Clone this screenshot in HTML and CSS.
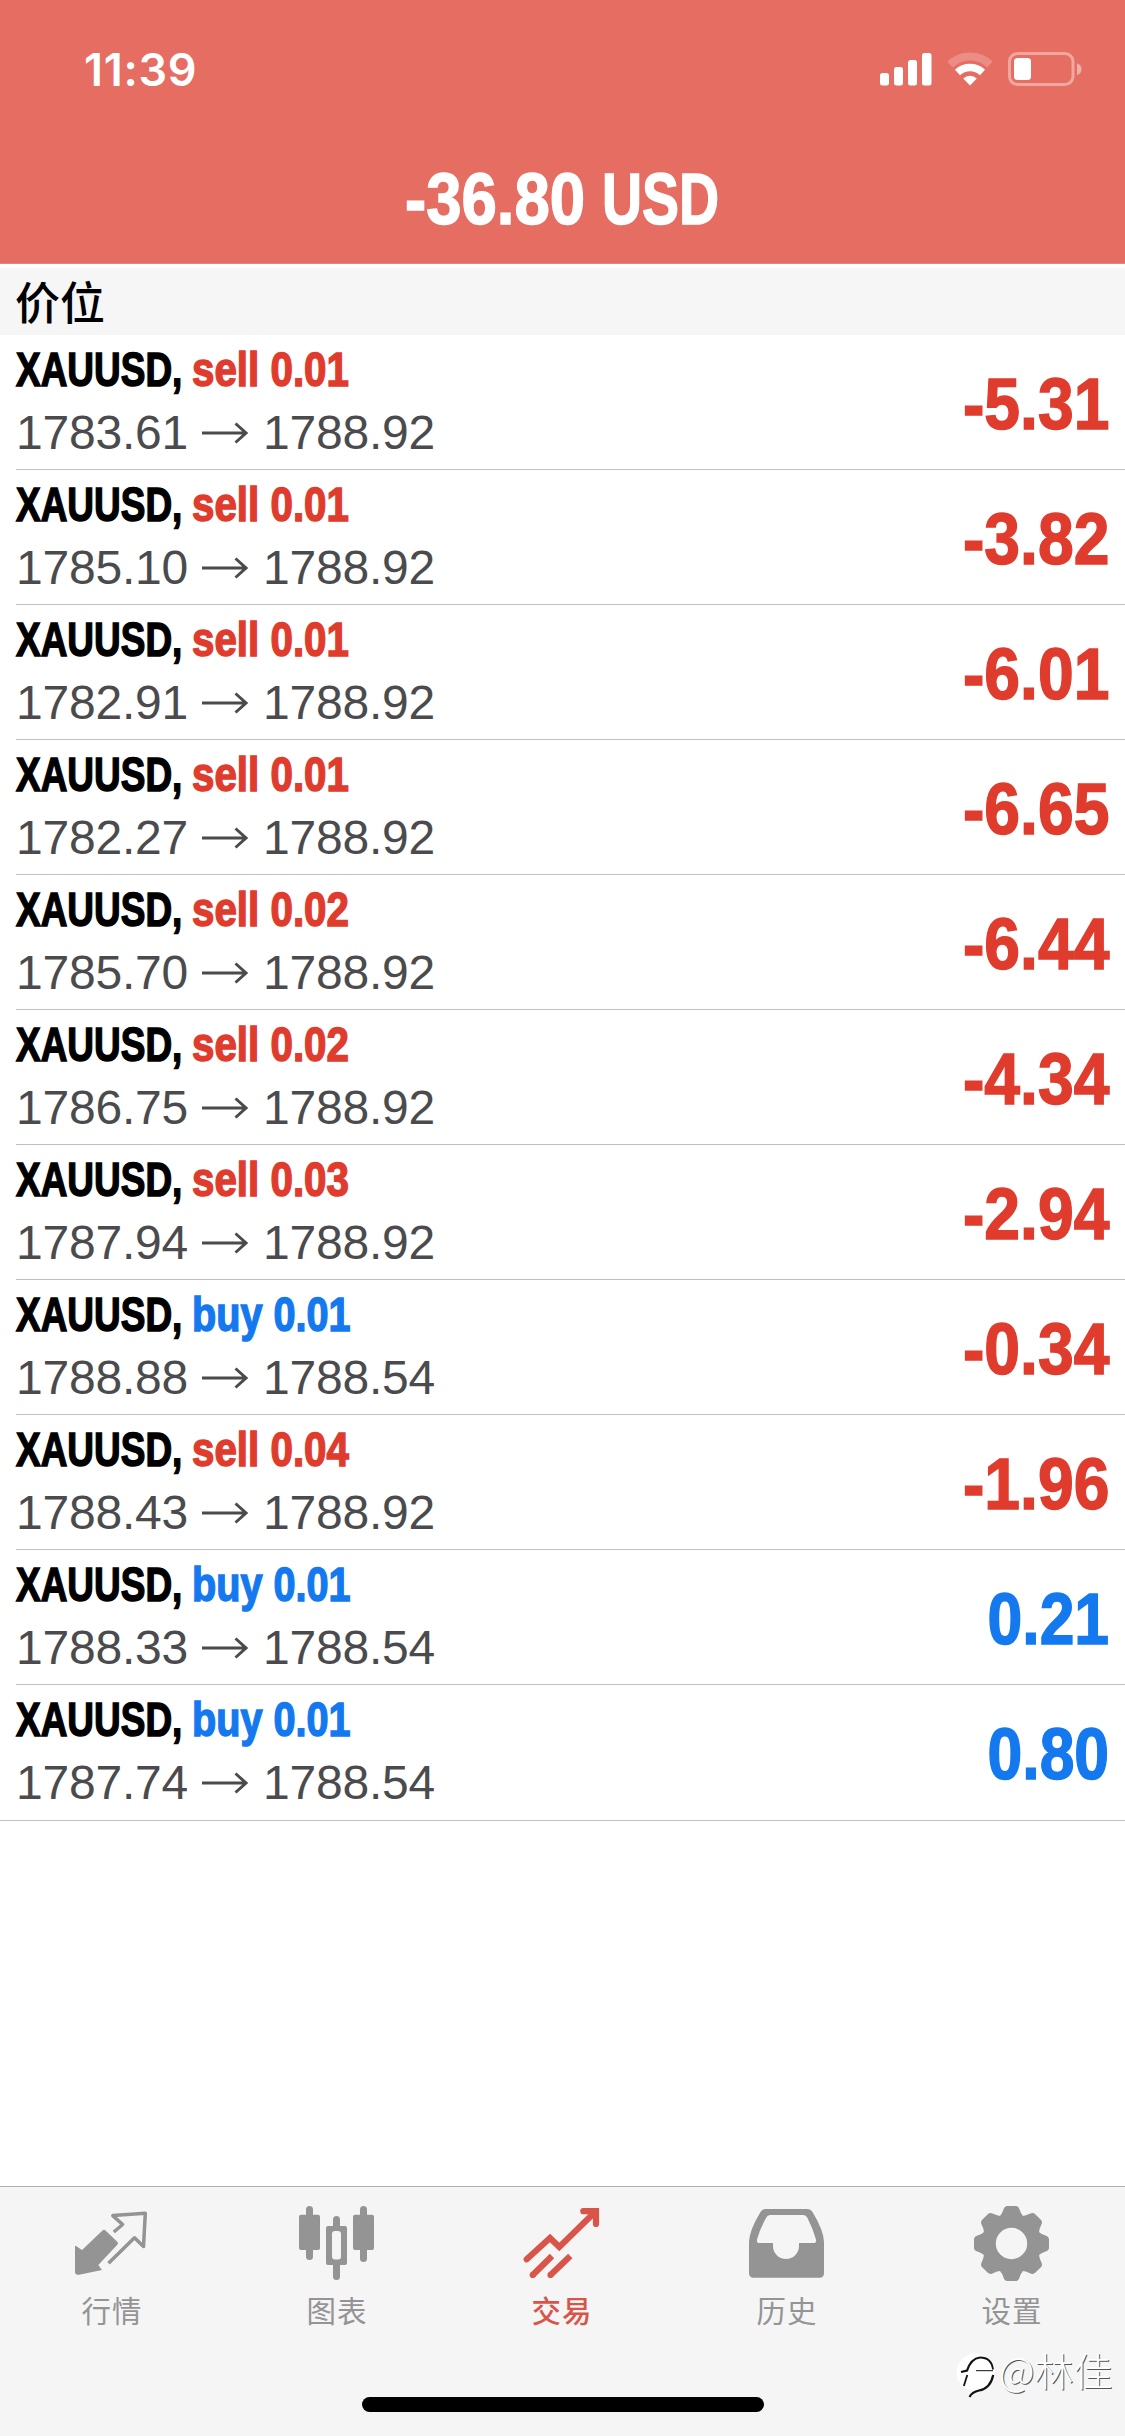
FILE: index.html
```html
<!DOCTYPE html>
<html lang="zh-CN">
<head>
<meta charset="utf-8">
<title>交易</title>
<link rel="stylesheet" href="styles.css">
</head>
<body>
<div class="app">
  <header class="header">
    <div class="status">
      <span class="time">11:39</span>
      <div class="indicators">
        <svg class="signal" width="52" height="34" viewBox="0 0 52 34" fill="#fff"><rect x="0" y="21" width="9" height="12.5" rx="2.5"/><rect x="14" y="15" width="9" height="18.5" rx="2.5"/><rect x="28" y="8" width="9" height="25.5" rx="2.5"/><rect x="42" y="1" width="9.500" height="32.500" rx="2.500"/></svg>
        <svg class="wifi" width="46" height="34" viewBox="0 0 46 34" fill="none" stroke="#fff"><path d="M3 12.500A29 29 0 0 1 43 12.500" stroke-width="8" opacity=".22"/><path d="M10.500 20.500A18.300 18.300 0 0 1 35.500 20.500" stroke-width="7.500"/><path d="M23 33.500L16.200 26.600A9.800 9.800 0 0 1 29.800 26.600Z" fill="#fff" stroke="none"/></svg>
        <svg class="battery" width="75" height="34" viewBox="0 0 75 34"><rect x="1.500" y="1.500" width="63.500" height="31" rx="8" fill="none" stroke="#fff" stroke-opacity=".4" stroke-width="3"/><path d="M69 11.500Q73.500 12.500 73.500 17.300T69 23Z" fill="#fff" fill-opacity=".45"/><rect x="6" y="6" width="17" height="22" rx="3.500" fill="#fff"/></svg>
      </div>
    </div>
    <h1 class="balance"><span class="amount">-36.80</span> <span class="currency">USD</span></h1>
  </header>
  <h2 class="section">价位</h2>
  <main class="positions" id="positions"></main>
  <nav class="tabs">
    <a class="tab">
      <svg width="75" height="75" viewBox="0 0 75 75"><path d="M1 40L7 44L27.500 24.500Q29 23 30.500 24.500L42.500 36Q43.500 37.300 42.500 38.500L23.300 59L27 64L4 68.800Q0 69 0 66V40Z" fill="currentColor"/><path d="M38.800 26L47.600 18.500L37.800 9.600L70.300 7.300L68.500 40.600L59.500 31.800L33.500 57.300" fill="none" stroke="currentColor" stroke-width="3.500" stroke-linejoin="round"/></svg>
      <span>行情</span>
    </a>
    <a class="tab">
      <svg width="75" height="75" viewBox="0 0 75 75" fill="currentColor"><rect x="-1" y="8.700" width="21" height="35.300" rx="2"/><rect x="6" y="0" width="7" height="54" rx="3.500"/><path fill-rule="evenodd" d="M28 20H45Q47 20 47 22V57Q47 59 45 59H28Q26 59 26 57V22Q26 20 28 20ZM35 25Q32 25 32 28V50.500Q32 53.500 35 53.500H38Q41 53.500 41 50.500V28Q41 25 38 25Z"/><path d="M33 21V13.500A3.500 3.500 0 0 1 40 13.500V21ZM33 58V70.500A3.500 3.500 0 0 0 40 70.500V58Z"/><rect x="53" y="8.700" width="21" height="35.300" rx="2"/><rect x="60" y="0" width="7" height="56" rx="3.500"/></svg>
      <span>图表</span>
    </a>
    <a class="tab active">
      <svg width="75" height="75" viewBox="0 0 75 75" fill="none" stroke="currentColor" stroke-width="6.200"><path d="M1.700 53.300L25 32L34.300 41L70 6M58.300 5.200H71V18" stroke-linecap="round" stroke-linejoin="miter"/><path d="M7.700 69L27 50M25.500 69L45.300 50"/><g fill="currentColor" stroke="none"><circle cx="7.700" cy="69" r="3.100"/><circle cx="25.500" cy="69" r="3.100"/></g></svg>
      <span>交易</span>
    </a>
    <a class="tab">
      <svg width="75" height="75" viewBox="0 0 75 75"><path fill="currentColor" fill-rule="evenodd" d="M16 3H57Q60.500 3 62.500 6Q73.500 24 74 36V67Q74 71.700 69.500 71.700H3.500Q-1 71.700 -1 67V36Q-.5 24 10.500 6Q12.500 3 16 3ZM20 9Q17.500 9 16 12Q10 23 7 33.500Q6.500 37 9.500 37H23V40A13 13 0 0 0 49 40V37H63.500Q66.500 37 66 33.500Q63 23 57.500 12Q56 9 53.500 9Z"/></svg>
      <span>历史</span>
    </a>
    <a class="tab">
      <svg width="75" height="75" viewBox="-37.500 -37.500 75 75" fill="currentColor"><defs><path id="tooth" d="M-14 -22L-11.500 -27.500Q-9.500 -29.500 -8 -34Q-7 -37.500 -4 -37.500H4Q7 -37.500 8 -34Q9.500 -29.500 11.500 -27.500L14 -22Z"/></defs><g transform="translate(-1 0)"><circle r="22.500" fill="none" stroke="currentColor" stroke-width="13.600"/><use href="#tooth"/><use href="#tooth" transform="rotate(45)"/><use href="#tooth" transform="rotate(90)"/><use href="#tooth" transform="rotate(135)"/><use href="#tooth" transform="rotate(180)"/><use href="#tooth" transform="rotate(225)"/><use href="#tooth" transform="rotate(270)"/><use href="#tooth" transform="rotate(315)"/></g></svg>
      <span>设置</span>
    </a>
  </nav>
  <div class="home"></div>
  <div class="mark">
    <svg width="44" height="52" viewBox="0 0 44 52" fill="none" stroke="#111"><circle cx="20.500" cy="24.500" r="19" fill="#fff" stroke="none"/><path d="M6 24L12 22.600Q16 10.500 25 9.500" stroke-width="2.200"/><path d="M25 9.500Q36.500 9.500 38 21.500M12.300 27L8.800 38" stroke-width="1.800"/><path d="M21 22.700H38" stroke-width="1"/><path d="M38.200 27Q35.500 40.500 24 42.500Q17 44 14.500 49" stroke-width="2.200"/></svg>
    <span>@林佳</span>
  </div>
</div>
<script src="app.js"></script>
</body>
</html>
```
FILE: app.js
```js
const positions = [
  ['sell', '0.01', '1783.61', '1788.92', '-5.31'],
  ['sell', '0.01', '1785.10', '1788.92', '-3.82'],
  ['sell', '0.01', '1782.91', '1788.92', '-6.01'],
  ['sell', '0.01', '1782.27', '1788.92', '-6.65'],
  ['sell', '0.02', '1785.70', '1788.92', '-6.44'],
  ['sell', '0.02', '1786.75', '1788.92', '-4.34'],
  ['sell', '0.03', '1787.94', '1788.92', '-2.94'],
  ['buy', '0.01', '1788.88', '1788.54', '-0.34'],
  ['sell', '0.04', '1788.43', '1788.92', '-1.96'],
  ['buy', '0.01', '1788.33', '1788.54', '0.21'],
  ['buy', '0.01', '1787.74', '1788.54', '0.80'],
];

document.getElementById('positions').innerHTML = positions.map(([side, lots, open, now, profit]) => `
  <article class="row">
    <div class="info">
      <div class="deal"><span class="symbol">XAUUSD,</span><span class="side ${side}">${side} ${lots}</span></div>
      <div class="prices"><span class="price">${open}</span><svg class="arrow" width="46" height="22" viewBox="0 0 46 22" fill="none" stroke="currentColor" stroke-width="3"><path d="M0 11H44M33.500 1.500L44 11L33.500 20.500"/></svg><span class="price">${now}</span></div>
    </div>
    <div class="profit ${profit.startsWith('-') ? 'loss' : 'gain'}">${profit}</div>
  </article>`).join('');
```
FILE: styles.css
```css
* { box-sizing: border-box; }
body { margin: 0; background: #fff; font-family: "Liberation Sans", "Noto Sans CJK SC", sans-serif; }
.app { position: relative; display: flex; flex-direction: column; width: 1125px; height: 2436px; overflow: hidden; }

.header { height: 264px; background: #e66d62; color: #fff; border-bottom: 1px solid #d98a80; }
.status { display: flex; justify-content: space-between; padding: 40px 42px 0 84px; height: 140px; }
.time { font: 600 45px/59px Inter, sans-serif; letter-spacing: 0.7px; }
.indicators { display: flex; align-items: flex-start; padding-top: 12px; }
.wifi { margin-left: 15px; }
.battery { margin-left: 15px; }
.balance { display: flex; margin: 0; padding-left: 405px; font-size: 73px; font-weight: 700; line-height: 117px; -webkit-text-stroke: 1.5px currentColor; }
.amount { width: 197px; transform: scaleX(.87); transform-origin: 0 50%; }
.currency { transform: scaleX(.76); transform-origin: 0 50%; }

.section { margin: 0; height: 71px; padding-left: 15px; background: #f6f6f6; border-top: 4px solid #fff; font: 500 45px/66px "Noto Sans CJK SC", sans-serif; color: #000; }

.positions { flex: 1; }
.row { display: flex; justify-content: space-between; height: 135px; margin-left: 16px; padding-right: 16px; border-bottom: 1px solid #c0c0c2; }
.row:last-child { margin-left: 0; padding-left: 16px; height: 136px; }
.deal { display: flex; height: 70px; font-size: 48px; font-weight: 700; line-height: 70px; white-space: nowrap; -webkit-text-stroke: 1.5px currentColor; }
.symbol { width: 176px; transform: scaleX(.77); transform-origin: 0 50%; }
.side { transform: scaleX(.84); transform-origin: 0 50%; }
.side.buy { transform: scaleX(.825); }
.sell, .loss { color: #e03c2d; }
.buy, .gain { color: #1479ef; }
.prices { display: flex; align-items: center; height: 56px; color: #4b4b4d; font-size: 48px; line-height: 56px; }
.price { width: 175px; letter-spacing: -.2px; }
.arrow { margin: 0 15px 0 11px; }
.profit { font-size: 73px; font-weight: 700; line-height: 138px; transform: scaleX(.88); transform-origin: 100% 50%; -webkit-text-stroke: 1.5px currentColor; }
.profit.gain { transform: scaleX(.855); }

.tabs { display: grid; grid-template-columns: repeat(5, 1fr); height: 250px; padding-top: 19px; background: #f5f5f5; border-top: 1px solid #aeaeae; color: #949494; }
.tab { display: flex; flex-direction: column; align-items: center; gap: 6px; font: 400 29.500px/44px "Noto Sans CJK SC", sans-serif; letter-spacing: 1px; }
.tab svg { overflow: visible; }
.tab span { margin-right: 1px; }
.active { color: #d9554a; font-weight: 500; }
.home { position: absolute; left: 362px; top: 2397px; width: 402px; height: 15px; border-radius: 8px; background: #000; }
.mark { position: absolute; left: 955px; top: 2348px; display: flex; font: 300 39px/42px "Noto Sans CJK SC", sans-serif; color: #fff; text-shadow: 1px 1px 0 #555; }
.mark span { margin-left: 0; }
```
